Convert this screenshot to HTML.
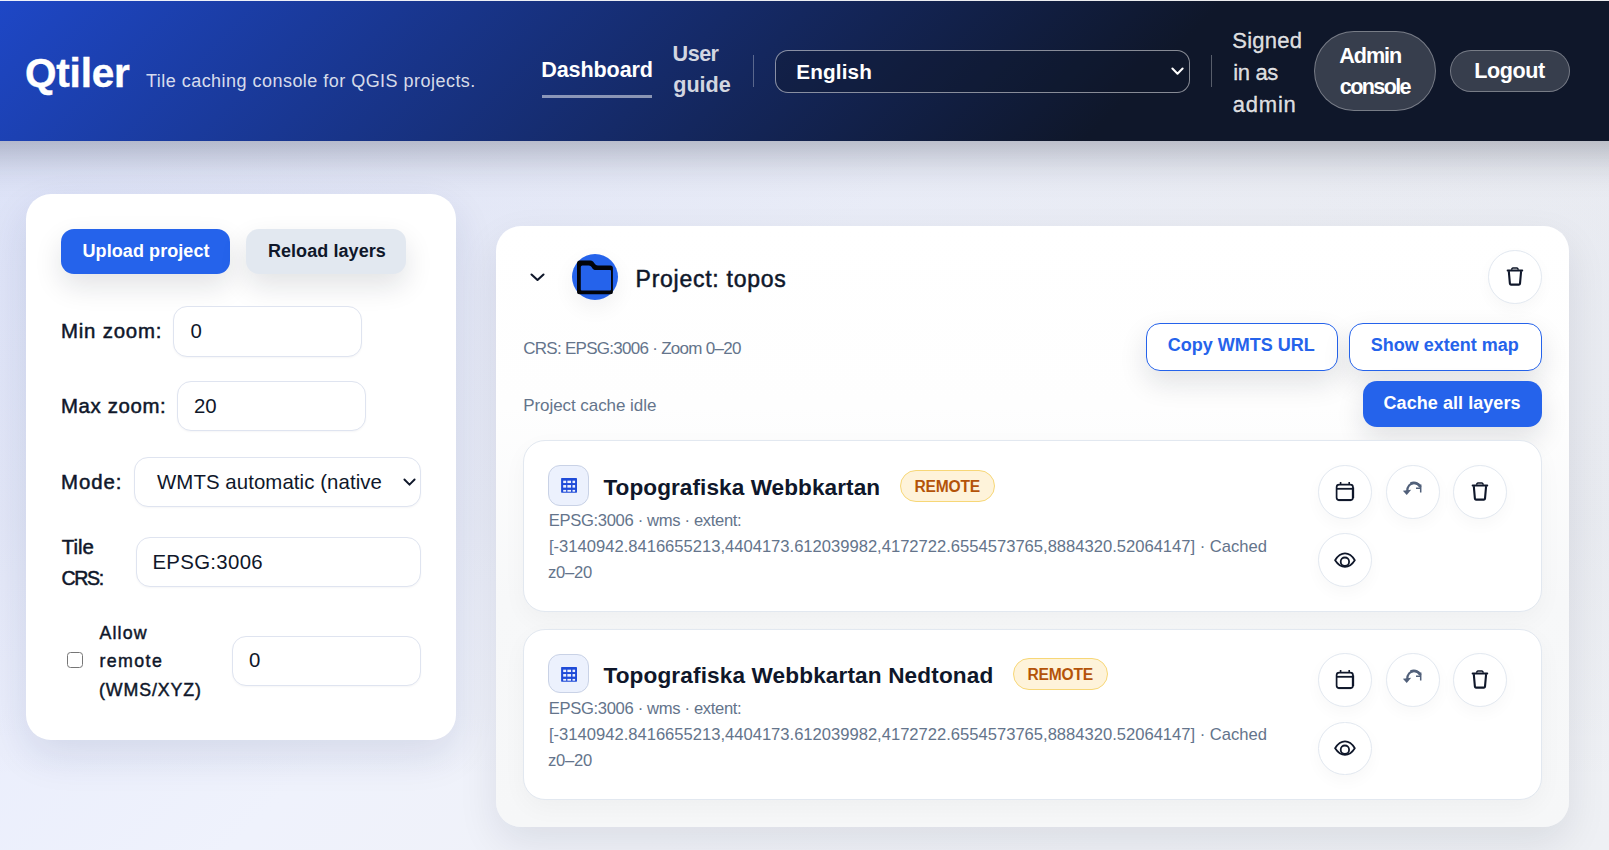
<!DOCTYPE html>
<html lang="en">
<head>
<meta charset="utf-8">
<title>Qtiler</title>
<style>
*{box-sizing:border-box;margin:0;padding:0}
html,body{width:1609px;height:850px;overflow:hidden}
body{font-family:"Liberation Sans",sans-serif;color:#0f172a;position:relative;
 background:linear-gradient(180deg,rgba(30,41,80,.03) 141px,rgba(30,41,80,.03) 520px,rgba(30,41,80,0) 790px),linear-gradient(135deg,#e1e7fd 0%,#e9edfc 24%,#eff2fc 44%,#f0f2f8 60%,#eef0f4 100%)}
.abs{position:absolute}
.t{position:absolute;white-space:nowrap;line-height:1}
#hdr{position:absolute;left:0;top:0;width:1609px;height:141px;
 background:linear-gradient(135deg,#1e47c6 0%,#0f172a 70%);color:#fff}
#hsh{position:absolute;left:-100px;top:0;width:1809px;height:141px;box-shadow:0 10px 40px rgba(15,23,42,.3)}
#hdr:before{content:"";position:absolute;left:0;top:0;width:100%;height:1px;background:rgba(255,255,255,.92)}
.pill{position:absolute;border-radius:999px;background:rgba(255,255,255,.17);border:1px solid rgba(255,255,255,.32)}
.card{position:absolute;background:#fff;border-radius:25px;box-shadow:0 16px 40px rgba(15,23,42,.09)}
.inp{position:absolute;background:#fff;border:1px solid #dfe4f0;border-radius:14px;height:50px;
 box-shadow:0 1px 2px rgba(15,23,42,.04)}
.btn{position:absolute;border-radius:13px;box-shadow:0 12px 28px rgba(15,23,42,.12)}
.lcard{position:absolute;left:27.4px;width:1018.6px;height:171.3px;background:#fff;border:1px solid #e2e8f0;border-radius:22px;
 box-shadow:0 8px 24px rgba(15,23,42,.035)}
.circ{position:absolute;width:53.6px;height:53.6px;border-radius:50%;background:#fff;border:1px solid #e2e8f0;
 box-shadow:0 6px 16px rgba(15,23,42,.03)}
.circ svg{position:absolute}
.badge{position:absolute;height:32px;border-radius:16px;background:#fef3da;border:1px solid #f7d777}
.ibox{position:absolute;left:23.4px;top:23.5px;width:41.3px;height:40.7px;border-radius:12px;background:#ecf1fd;border:1px solid #c9d2e6}
</style>
</head>
<body>

<div id="hsh"></div>
<header id="hdr">
  <div class="t" style="left:25px;top:53px;font-size:40.5px;font-weight:700;letter-spacing:-0.2px;-webkit-text-stroke:0.4px currentColor;color:#fff">Qtiler</div>
  <div class="t" style="left:146px;top:72.2px;font-size:18px;letter-spacing:0.47px;color:rgba(255,255,255,.84)">Tile caching console for QGIS projects.</div>
  <nav>
  <div class="t" style="left:541.3px;top:59.2px;font-size:21.6px;font-weight:700;letter-spacing:-0.14px;color:#fff">Dashboard</div>
  <div class="abs" style="left:542px;top:95px;width:110px;height:3.4px;background:rgba(255,255,255,.5)"></div>
  <div class="t" style="left:672.6px;top:43px;font-size:21.6px;font-weight:700;letter-spacing:-0.53px;color:rgba(255,255,255,.82)">User</div>
  <div class="t" style="left:673.2px;top:74px;font-size:21.6px;font-weight:700;color:rgba(255,255,255,.82)">guide</div>
  </nav>
  <div class="abs" style="left:753px;top:55px;width:1px;height:32px;background:rgba(255,255,255,.3)"></div>
  <div class="abs" style="left:775px;top:50px;width:415px;height:43px;border-radius:13px;background:rgba(15,23,42,.38);border:1px solid rgba(255,255,255,.5)">
    <div class="t" style="left:20.3px;top:11.2px;font-size:20.7px;font-weight:700;letter-spacing:0.15px;color:#fff">English</div>
    <svg class="abs" style="left:395.2px;top:15.8px" width="13" height="9" viewBox="0 0 13 9"><path d="M1.4 1.5 L6.5 6.7 L11.6 1.5" fill="none" stroke="#fff" stroke-width="2" stroke-linecap="round" stroke-linejoin="round"/></svg>
  </div>
  <div class="abs" style="left:1211px;top:55px;width:1px;height:32px;background:rgba(255,255,255,.3)"></div>
  <div class="t" style="left:1232.3px;top:30px;font-size:22px;letter-spacing:0.22px;-webkit-text-stroke:0.3px currentColor;color:rgba(255,255,255,.86)">Signed</div>
  <div class="t" style="left:1233.3px;top:62px;font-size:22px;letter-spacing:-0.38px;-webkit-text-stroke:0.3px currentColor;color:rgba(255,255,255,.86)">in as</div>
  <div class="t" style="left:1232.8px;top:94px;font-size:22px;letter-spacing:0.78px;-webkit-text-stroke:0.3px currentColor;color:rgba(255,255,255,.86)">admin</div>
  <div class="pill" style="left:1314px;top:31px;width:122px;height:80px;border-radius:40px">
    <div class="t" style="left:24.3px;top:12.8px;font-size:21.6px;font-weight:700;letter-spacing:-1.07px;color:#fff">Admin</div>
    <div class="t" style="left:24.8px;top:43.6px;font-size:21.6px;font-weight:700;letter-spacing:-1.63px;color:#fff">console</div>
  </div>
  <div class="pill" style="left:1450px;top:50px;width:120px;height:42px">
    <div class="t" style="left:23.2px;top:8.9px;font-size:21.6px;font-weight:700;letter-spacing:-0.44px;color:#fff">Logout</div>
  </div>
</header>

<aside class="card" style="left:26px;top:194px;width:430px;height:546px;box-shadow:0 16px 40px rgba(20,40,100,.11)">
  <div class="btn" style="left:35px;top:35px;width:169px;height:45px;background:#2563eb"></div>
  <div class="t" style="left:56.5px;top:48.1px;font-size:18px;font-weight:700;letter-spacing:0.08px;color:#fff">Upload project</div>
  <div class="btn" style="left:220px;top:35px;width:160px;height:45px;background:#e2e8f0"></div>
  <div class="t" style="left:241.9px;top:48.1px;font-size:18px;font-weight:700;letter-spacing:0.07px;color:#0f172a">Reload layers</div>

  <div class="t" style="left:35px;top:127.2px;font-size:20.4px;letter-spacing:0.8px;-webkit-text-stroke:0.5px currentColor">Min zoom:</div>
  <div class="inp" style="left:147.4px;top:112.4px;width:188.6px;height:50.4px"></div>
  <div class="t" style="left:164.4px;top:127.2px;font-size:20.4px">0</div>

  <div class="t" style="left:35px;top:202.1px;font-size:20.4px;letter-spacing:0.62px;-webkit-text-stroke:0.5px currentColor">Max zoom:</div>
  <div class="inp" style="left:151px;top:187px;width:189px"></div>
  <div class="t" style="left:168px;top:202.1px;font-size:20.4px">20</div>

  <div class="t" style="left:35px;top:277.6px;font-size:20.4px;letter-spacing:0.95px;-webkit-text-stroke:0.5px currentColor">Mode:</div>
  <div class="inp" style="left:108px;top:262.5px;width:287px">
    <svg class="abs" style="left:267.5px;top:20.4px" width="13" height="9" viewBox="0 0 13 9"><path d="M1.4 1.5 L6.5 6.7 L11.6 1.5" fill="none" stroke="#0f172a" stroke-width="1.9" stroke-linecap="round" stroke-linejoin="round"/></svg>
  </div>
  <div class="t" style="left:131px;top:277.6px;font-size:20.4px;letter-spacing:0.08px">WMTS automatic (native</div>

  <div class="t" style="left:35.8px;top:342.9px;font-size:20.4px;-webkit-text-stroke:0.5px currentColor">Tile</div>
  <div class="t" style="left:35.5px;top:374.9px;font-size:19.6px;letter-spacing:-1.37px;-webkit-text-stroke:0.5px currentColor">CRS:</div>
  <div class="inp" style="left:110px;top:343px;width:285px"></div>
  <div class="t" style="left:126.4px;top:357.8px;font-size:20.4px;letter-spacing:0.32px">EPSG:3006</div>

  <div class="abs" style="left:41px;top:458.3px;width:16px;height:16px;border:1.5px solid #767676;border-radius:3.5px;background:#fff"></div>
  <div class="t" style="left:73.4px;top:430.8px;font-size:17.8px;letter-spacing:1.2px;-webkit-text-stroke:0.45px currentColor">Allow</div>
  <div class="t" style="left:73.4px;top:459.4px;font-size:17.8px;letter-spacing:1.42px;-webkit-text-stroke:0.45px currentColor">remote</div>
  <div class="t" style="left:73px;top:488px;font-size:17.8px;letter-spacing:0.9px;-webkit-text-stroke:0.45px currentColor">(WMS/XYZ)</div>
  <div class="inp" style="left:206px;top:442px;width:189px"></div>
  <div class="t" style="left:223.1px;top:456.4px;font-size:20.4px">0</div>
</aside>

<main class="card" style="left:496px;top:226px;width:1073px;height:601px;background:linear-gradient(180deg,#fff 0%,#fefefe 30%,#f7f8f9 62%,#f6f7f8 100%)">
  <svg class="abs" style="left:34px;top:47.3px" width="15" height="9" viewBox="0 0 15 9"><path d="M1.5 1.5 L7.5 7 L13.5 1.5" fill="none" stroke="#0f172a" stroke-width="2.1" stroke-linecap="round" stroke-linejoin="round"/></svg>
  <div class="abs" style="left:76px;top:27.8px;width:46px;height:46px;border-radius:50%;background:#2563eb;box-shadow:0 8px 22px rgba(15,23,42,.06)">
    <svg class="abs" style="left:0;top:0" width="46" height="46" viewBox="0 0 46 46"><path d="M8 6.5H18.4C20.4 6.5 21.2 7.6 22.2 9C23.2 10.4 24 11.5 26 11.5H38.4A2.5 2.5 0 0 1 40.9 14V37.7A2.5 2.5 0 0 1 38.4 40.2H7.5A2.5 2.5 0 0 1 5 37.7V9.5A3 3 0 0 1 8 6.5Z" fill="#02040a"/><path d="M10.3 11.5H16.6C18.6 11.5 19.3 12.6 20.2 13.9C21.1 15.2 22 16.1 24 16.1H38A1 1 0 0 1 39 17.1V35.4A1 1 0 0 1 38 36.4H9.8A1 1 0 0 1 8.8 35.4V13A1.5 1.5 0 0 1 10.3 11.5Z" fill="#2563eb"/></svg>
  </div>
  <div class="t" style="left:139.6px;top:41.7px;font-size:23px;letter-spacing:0.73px;-webkit-text-stroke:0.5px currentColor">Project: topos</div>
  <div class="circ" style="left:992px;top:24px"><svg width="54" height="54" style="left:-1.2px;top:-1.5px" viewBox="0 0 54 54"><path d="M19.6 20.5H34.3" fill="none" stroke="#0f172a" stroke-width="1.9" stroke-linecap="round"/><path d="M23.7 19.8V19.3A1.2 1.2 0 0 1 24.9 18.1H28.9A1.2 1.2 0 0 1 30.1 19.3V19.8" fill="none" stroke="#0f172a" stroke-width="1.5"/><path d="M20.8 21.2L21.9 33.6A1 1 0 0 0 22.9 34.6H31A1 1 0 0 0 32 33.6L33.1 21.2" fill="none" stroke="#0f172a" stroke-width="2.1" stroke-linejoin="round"/></svg></div>

  <div class="t" style="left:27.2px;top:113.9px;font-size:17px;letter-spacing:-0.72px;color:#64748b">CRS: EPSG:3006 · Zoom 0–20</div>
  <div class="t" style="left:27.2px;top:170.8px;font-size:17px;letter-spacing:-0.06px;color:#64748b">Project cache idle</div>

  <div class="btn" style="left:650px;top:97px;width:192px;height:48px;background:#fff;border:1.5px solid #2563eb;border-radius:14px"></div>
  <div class="t" style="left:671.7px;top:110px;font-size:18px;font-weight:700;color:#2563eb">Copy WMTS URL</div>
  <div class="btn" style="left:853px;top:97px;width:193px;height:48px;background:#fff;border:1.5px solid #2563eb;border-radius:14px"></div>
  <div class="t" style="left:874.7px;top:110px;font-size:18px;font-weight:700;letter-spacing:0.01px;color:#2563eb">Show extent map</div>
  <div class="btn" style="left:867px;top:155px;width:179px;height:46px;background:#2563eb;border-radius:14px"></div>
  <div class="t" style="left:887.5px;top:167.7px;font-size:18px;font-weight:700;letter-spacing:0.06px;color:#fff">Cache all layers</div>

  <section class="lcard" style="top:214.4px">
    <div class="ibox"><svg class="abs" style="left:11.8px;top:12.2px" width="16.1" height="14.9" viewBox="0 0 16 15"><rect x="0" y="0" width="16" height="14.8" rx=".6" fill="#1f4bd8"/><g fill="#eef2fe"><rect x="2.1" y="2.7" width="3" height="2.4"/><rect x="6.3" y="2.7" width="3.7" height="2.4"/><rect x="11.5" y="2.7" width="2.6" height="2.4"/><rect x="2.1" y="7.1" width="3" height="2.6"/><rect x="6.3" y="7.1" width="3.7" height="2.6"/><rect x="11.5" y="7.1" width="2.6" height="2.6"/><rect x="2.1" y="12" width="3" height="1.8"/><rect x="6.3" y="12" width="3.7" height="1.8"/><rect x="11.5" y="12" width="2.6" height="1.8"/></g></svg></div>
    <div class="t" style="left:79px;top:35.2px;font-size:22.6px;font-weight:700;letter-spacing:0.06px">Topografiska Webbkartan</div>
    <div class="badge" style="left:375.8px;top:28.7px;width:94.8px"></div>
    <div class="t" style="left:390.2px;top:37.8px;font-size:15.6px;font-weight:700;letter-spacing:-0.22px;color:#b45309">REMOTE</div>
    <div class="t" style="left:24.4px;top:71.2px;font-size:16.6px;letter-spacing:-0.34px;color:#64748b">EPSG:3006 · wms · extent:</div>
    <div class="t" style="left:24.6px;top:97.4px;font-size:16.6px;letter-spacing:-0.01px;color:#64748b">[-3140942.8416655213,4404173.612039982,4172722.6554573765,8884320.52064147] · Cached</div>
    <div class="t" style="left:23.6px;top:123.5px;font-size:16.6px;letter-spacing:-0.25px;color:#64748b">z0–20</div>
    <div class="circ" style="left:793.8px;top:23.9px"><svg width="54" height="54" style="left:-1.2px;top:-1.5px" viewBox="0 0 54 54"><rect x="18.6" y="19.6" width="16.4" height="15.5" rx="2.6" fill="none" stroke="#0f172a" stroke-width="1.7"/><path d="M18.6 23.8H35" fill="none" stroke="#0f172a" stroke-width="1.8"/><path d="M35 22.5V33" fill="none" stroke="#0f172a" stroke-width="2.3"/><path d="M20.5 35.1H33" fill="none" stroke="#0f172a" stroke-width="2"/><path d="M22.6 16.9V19.4M31.2 16.9V19.4" fill="none" stroke="#0f172a" stroke-width="1.6"/></svg></div>
    <div class="circ" style="left:861.6px;top:23.9px"><svg width="54" height="54" style="left:-1.2px;top:-1.5px" viewBox="0 0 54 54"><path d="M21.2 26.3C21 21.5 24.3 18.1 28 18.1C31 18.1 33.4 19.6 34.5 22.4" fill="none" stroke="#51607a" stroke-width="2.2"/><path d="M24.6 18.6C27.5 16.9 32 17.6 34 21.4" fill="none" stroke="#51607a" stroke-width="2.6"/><path d="M16.9 25.7L25.2 24.7L20.7 30Z" fill="#51607a"/><path d="M30 23.3H34.8M34.7 19.4V27.5" fill="none" stroke="#51607a" stroke-width="1.5"/></svg></div>
    <div class="circ" style="left:928.7px;top:23.9px"><svg width="54" height="54" style="left:-1.2px;top:-1.5px" viewBox="0 0 54 54"><path d="M19.6 20.5H34.3" fill="none" stroke="#0f172a" stroke-width="1.9" stroke-linecap="round"/><path d="M23.7 19.8V19.3A1.2 1.2 0 0 1 24.9 18.1H28.9A1.2 1.2 0 0 1 30.1 19.3V19.8" fill="none" stroke="#0f172a" stroke-width="1.5"/><path d="M20.8 21.2L21.9 33.6A1 1 0 0 0 22.9 34.6H31A1 1 0 0 0 32 33.6L33.1 21.2" fill="none" stroke="#0f172a" stroke-width="2.1" stroke-linejoin="round"/></svg></div>
    <div class="circ" style="left:793.8px;top:92px"><svg width="54" height="54" style="left:-1.2px;top:-1.5px" viewBox="0 0 54 54"><path d="M17.1 27.2C20 22.6 23.5 20.4 27 20.4C30.5 20.4 34 22.6 36.8 27.2C34 31.7 30.5 33.8 27 33.8C23.5 33.8 20 31.7 17.1 27.2Z" fill="none" stroke="#0f172a" stroke-width="1.8" stroke-linejoin="round"/><circle cx="26.9" cy="28.7" r="4.2" fill="none" stroke="#0f172a" stroke-width="1.8"/></svg></div>
  </section>

  <section class="lcard" style="top:402.5px">
    <div class="ibox" style="top:24.6px;height:39.3px"><svg class="abs" style="left:11.8px;top:11.6px" width="16.1" height="14.9" viewBox="0 0 16 15"><rect x="0" y="0" width="16" height="14.8" rx=".6" fill="#1f4bd8"/><g fill="#eef2fe"><rect x="2.1" y="2.7" width="3" height="2.4"/><rect x="6.3" y="2.7" width="3.7" height="2.4"/><rect x="11.5" y="2.7" width="2.6" height="2.4"/><rect x="2.1" y="7.1" width="3" height="2.6"/><rect x="6.3" y="7.1" width="3.7" height="2.6"/><rect x="11.5" y="7.1" width="2.6" height="2.6"/><rect x="2.1" y="12" width="3" height="1.8"/><rect x="6.3" y="12" width="3.7" height="1.8"/><rect x="11.5" y="12" width="2.6" height="1.8"/></g></svg></div>
    <div class="t" style="left:79px;top:35.1px;font-size:22.6px;font-weight:700;letter-spacing:0.13px">Topografiska Webbkartan Nedtonad</div>
    <div class="badge" style="left:488.7px;top:28.9px;width:94.8px"></div>
    <div class="t" style="left:503.2px;top:37.7px;font-size:15.6px;font-weight:700;letter-spacing:-0.24px;color:#b45309">REMOTE</div>
    <div class="t" style="left:24.4px;top:71.1px;font-size:16.6px;letter-spacing:-0.34px;color:#64748b">EPSG:3006 · wms · extent:</div>
    <div class="t" style="left:24.6px;top:97.3px;font-size:16.6px;letter-spacing:-0.01px;color:#64748b">[-3140942.8416655213,4404173.612039982,4172722.6554573765,8884320.52064147] · Cached</div>
    <div class="t" style="left:23.6px;top:123.4px;font-size:16.6px;letter-spacing:-0.25px;color:#64748b">z0–20</div>
    <div class="circ" style="left:793.8px;top:23.9px"><svg width="54" height="54" style="left:-1.2px;top:-1.5px" viewBox="0 0 54 54"><rect x="18.6" y="19.6" width="16.4" height="15.5" rx="2.6" fill="none" stroke="#0f172a" stroke-width="1.7"/><path d="M18.6 23.8H35" fill="none" stroke="#0f172a" stroke-width="1.8"/><path d="M35 22.5V33" fill="none" stroke="#0f172a" stroke-width="2.3"/><path d="M20.5 35.1H33" fill="none" stroke="#0f172a" stroke-width="2"/><path d="M22.6 16.9V19.4M31.2 16.9V19.4" fill="none" stroke="#0f172a" stroke-width="1.6"/></svg></div>
    <div class="circ" style="left:861.6px;top:23.9px"><svg width="54" height="54" style="left:-1.2px;top:-1.5px" viewBox="0 0 54 54"><path d="M21.2 26.3C21 21.5 24.3 18.1 28 18.1C31 18.1 33.4 19.6 34.5 22.4" fill="none" stroke="#51607a" stroke-width="2.2"/><path d="M24.6 18.6C27.5 16.9 32 17.6 34 21.4" fill="none" stroke="#51607a" stroke-width="2.6"/><path d="M16.9 25.7L25.2 24.7L20.7 30Z" fill="#51607a"/><path d="M30 23.3H34.8M34.7 19.4V27.5" fill="none" stroke="#51607a" stroke-width="1.5"/></svg></div>
    <div class="circ" style="left:928.7px;top:23.9px"><svg width="54" height="54" style="left:-1.2px;top:-1.5px" viewBox="0 0 54 54"><path d="M19.6 20.5H34.3" fill="none" stroke="#0f172a" stroke-width="1.9" stroke-linecap="round"/><path d="M23.7 19.8V19.3A1.2 1.2 0 0 1 24.9 18.1H28.9A1.2 1.2 0 0 1 30.1 19.3V19.8" fill="none" stroke="#0f172a" stroke-width="1.5"/><path d="M20.8 21.2L21.9 33.6A1 1 0 0 0 22.9 34.6H31A1 1 0 0 0 32 33.6L33.1 21.2" fill="none" stroke="#0f172a" stroke-width="2.1" stroke-linejoin="round"/></svg></div>
    <div class="circ" style="left:793.8px;top:92px"><svg width="54" height="54" style="left:-1.2px;top:-1.5px" viewBox="0 0 54 54"><path d="M17.1 27.2C20 22.6 23.5 20.4 27 20.4C30.5 20.4 34 22.6 36.8 27.2C34 31.7 30.5 33.8 27 33.8C23.5 33.8 20 31.7 17.1 27.2Z" fill="none" stroke="#0f172a" stroke-width="1.8" stroke-linejoin="round"/><circle cx="26.9" cy="28.7" r="4.2" fill="none" stroke="#0f172a" stroke-width="1.8"/></svg></div>
  </section>
</main>

</body>
</html>
